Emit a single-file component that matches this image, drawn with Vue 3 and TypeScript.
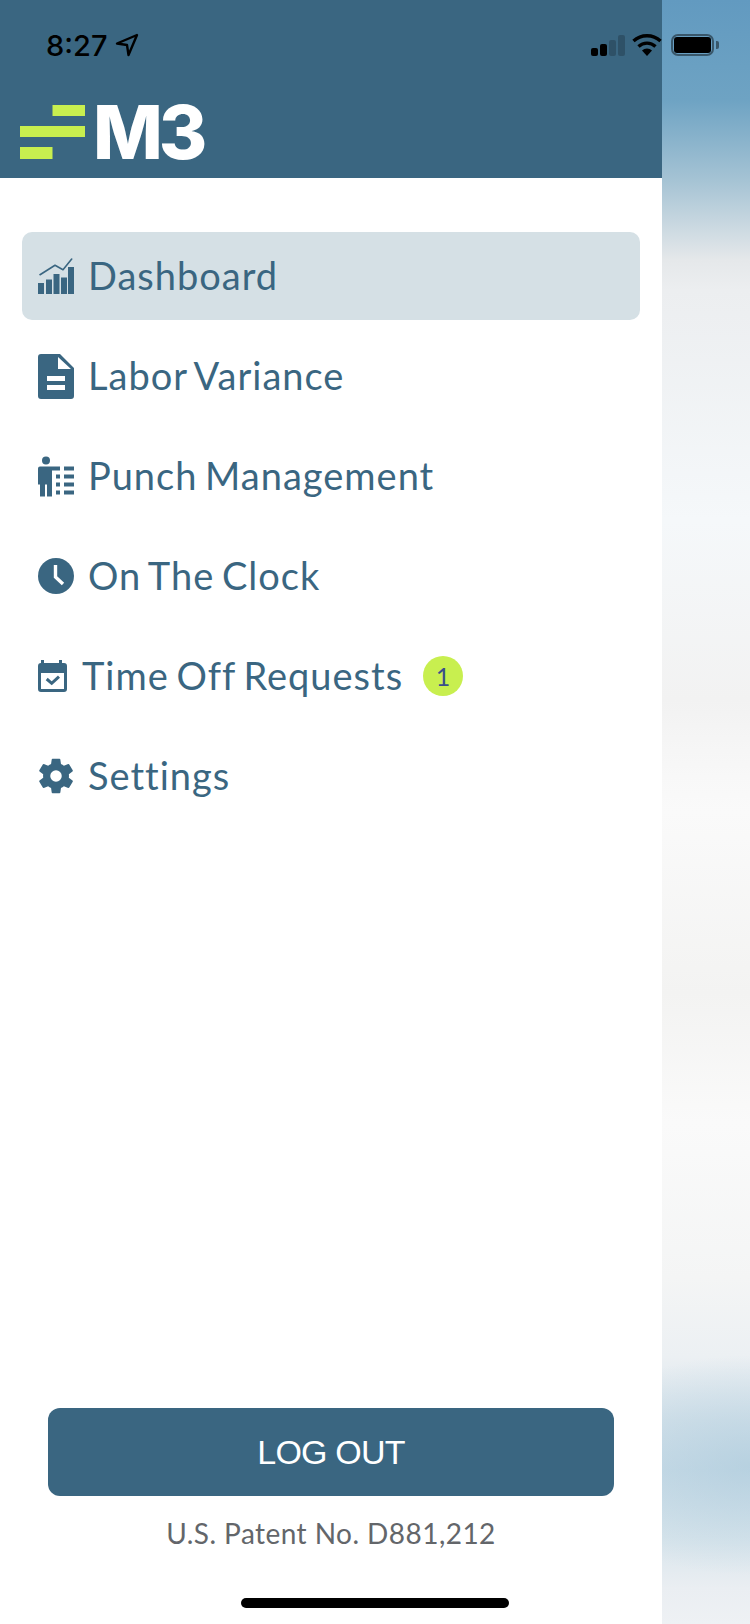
<template>
  <div class="screen">
    <aside class="drawer">
      <header class="brand">
        <svg class="logo-bars" viewBox="0 0 65 54" aria-hidden="true">
          <rect x="32.500" y="0" width="32.500" height="11" fill="#c8ef4f" />
          <rect x="0" y="21" width="65" height="11" fill="#c8ef4f" />
          <rect x="0" y="42" width="32.500" height="12" fill="#c8ef4f" />
        </svg>
        <span class="logo-text">M3</span>
      </header>

      <nav class="menu">
        <a
          v-for="item in items"
          :key="item.label"
          class="menu-item"
          :class="{ active: item.active }"
        >
          <svg v-if="item.icon === 'chart'" class="icon" viewBox="0 0 36 36">
            <path d="M0 25h6v11H0zM8 21.500h6V36H8zM15.500 16h6v20h-6zM23 19.500h6V36h-6zM30 9h6v27h-6z" fill="currentColor" />
            <path d="M2 16.700 17 7.300l8 4.400L33.700 1" fill="none" stroke="currentColor" stroke-width="1.600" stroke-linecap="round" stroke-linejoin="round" />
          </svg>
          <svg v-else-if="item.icon === 'file'" class="icon tall" viewBox="0 0 36 45">
            <path d="M3 0h19l14 14v28a3 3 0 0 1-3 3H3a3 3 0 0 1-3-3V3a3 3 0 0 1 3-3zM20 3v12h13zM9 22v5h18v-5zM9 31v5h18v-5z" fill="currentColor" fill-rule="evenodd" />
          </svg>
          <svg v-else-if="item.icon === 'person'" class="icon tall" viewBox="0 0 36 40">
            <circle cx="8" cy="4" r="4" fill="currentColor" />
            <path d="M2 10h20v4h-8v26H9V28H7v12H2V28H0V12a2 2 0 0 1 2-2z" fill="currentColor" />
            <path d="M26 10h10v4H26zM18 18h4v4h-4zM26 18h10v4H26zM18 26h4v4h-4zM26 26h10v4H26zM18 34h4v4h-4zM26 34h10v4H26z" fill="currentColor" />
          </svg>
          <svg v-else-if="item.icon === 'clock'" class="icon" viewBox="0 0 36 36">
            <circle cx="18" cy="18" r="18" fill="currentColor" />
            <path d="M17.500 7v12l7.500 7" fill="none" stroke="#fff" stroke-width="3.400" />
          </svg>
          <svg v-else-if="item.icon === 'calendar'" class="icon cal" viewBox="0 0 29 32">
            <path d="M3 0h3v3h15V0h3v3h2a3 3 0 0 1 3 3v23a3 3 0 0 1-3 3H3a3 3 0 0 1-3-3V6a3 3 0 0 1 3-3zM3 13v16h23V13z" fill="currentColor" fill-rule="evenodd" />
            <path d="M8.700 19l5 4.300 7.300-6.600" fill="none" stroke="currentColor" stroke-width="3" />
          </svg>
          <svg v-else class="icon" viewBox="0 0 24 24">
            <path d="M19.140 12.940a7.100 7.100 0 0 0 0-1.880l2.030-1.580a.5.500 0 0 0 .12-.61l-1.920-3.320a.5.500 0 0 0-.59-.22l-2.390.96a7 7 0 0 0-1.620-.94l-.36-2.540a.5.500 0 0 0-.48-.41h-3.840a.5.500 0 0 0-.47.410l-.36 2.540a7.300 7.300 0 0 0-1.620.94l-2.390-.96a.5.500 0 0 0-.59.220L2.740 8.870a.5.500 0 0 0 .12.610l2.030 1.580a7.400 7.400 0 0 0 0 1.880l-2.030 1.580a.5.500 0 0 0-.12.610l1.920 3.320a.5.500 0 0 0 .59.220l2.390-.96a7 7 0 0 0 1.620.94l.36 2.540a.5.500 0 0 0 .47.410h3.840a.5.500 0 0 0 .48-.41l.36-2.540a7 7 0 0 0 1.620-.94l2.390.96a.5.500 0 0 0 .59-.22l1.920-3.320a.5.500 0 0 0-.12-.61zM12 15.200a3.200 3.200 0 1 1 0-6.400 3.200 3.200 0 0 1 0 6.400z" fill="currentColor" transform="translate(-2.400 -2.400) scale(1.200)" />
          </svg>
          <span class="label">{{ item.label }}</span>
          <span v-if="item.badge" class="badge">{{ item.badge }}</span>
        </a>
      </nav>

      <footer class="foot">
        <button class="logout" type="button">LOG OUT</button>
        <p class="patent">U.S. Patent No. D881,212</p>
      </footer>
    </aside>
    <div class="backdrop"></div>

    <!-- status bar sits over both the drawer and the backdrop -->
    <div class="status">
      <span class="time">8:27</span>
      <svg class="loc" viewBox="0 0 24 24">
        <path d="M22 2 2 10.500l10 1.500 1.500 10z" fill="none" stroke="#000" stroke-width="2.400" stroke-linejoin="round" />
      </svg>
      <span class="status-gap"></span>
      <svg class="signal" viewBox="0 0 34 21">
        <rect x="0" y="13" width="7" height="8" rx="2" fill="#000" />
        <rect x="9" y="9" width="7" height="12" rx="2" fill="#000" />
        <rect x="18" y="5" width="7" height="16" rx="2" fill="#000" opacity=".2" />
        <rect x="27" y="0" width="7" height="21" rx="2" fill="#000" opacity=".2" />
      </svg>
      <svg class="wifi" viewBox="0 0 30 22">
        <path d="M15 22l-5-5.500a7.500 7.500 0 0 1 10 0z" fill="#000" />
        <path d="M6.500 12.500a12.500 12.500 0 0 1 17 0" fill="none" stroke="#000" stroke-width="3.400" />
        <path d="M1.500 7a20 20 0 0 1 27 0" fill="none" stroke="#000" stroke-width="3.400" />
      </svg>
      <span class="battery"><i></i></span>
      <span class="nub"></span>
    </div>
    <div class="home-bar"></div>
  </div>
</template>

<script setup lang="ts">
interface MenuItem {
  label: string
  icon: string
  active?: boolean
  badge?: number
}

const items: MenuItem[] = [
  { label: 'Dashboard', icon: 'chart', active: true },
  { label: 'Labor Variance', icon: 'file' },
  { label: 'Punch Management', icon: 'person' },
  { label: 'On The Clock', icon: 'clock' },
  { label: 'Time Off Requests', icon: 'calendar', badge: 1 },
  { label: 'Settings', icon: 'gear' }
]
</script>

<style>
html,
body {
  margin: 0;
  background: #fff;
}
</style>

<style scoped>
.screen {
  position: relative;
  display: flex;
  width: 750px;
  height: 1624px;
  overflow: hidden;
  font-family: Lato, 'Noto Sans', sans-serif;
}

.drawer {
  display: flex;
  flex-direction: column;
  width: 662px;
  background: #fff;
}

.brand {
  display: flex;
  align-items: flex-end;
  gap: 8px;
  box-sizing: border-box;
  height: 178px;
  padding: 0 0 19px 20px;
  background: #3a6681;
}

.logo-bars {
  width: 65px;
  height: 54px;
}

.logo-text {
  color: #fff;
  font-family: Inter, Lato, sans-serif;
  font-size: 74px;
  font-weight: 800;
  line-height: 54px;
  letter-spacing: -4px;
}

.menu {
  display: flex;
  flex-direction: column;
  gap: 12px;
  padding: 54px 22px 0;
}

.menu-item {
  display: flex;
  align-items: center;
  height: 88px;
  padding: 0 16px;
  border-radius: 10px;
  color: #3a6681;
}

.menu-item.active {
  background: #d5e0e5;
}

.icon {
  flex: none;
  width: 36px;
  height: 36px;
  margin-right: 14px;
}

.icon.tall {
  height: 45px;
}

.icon.cal {
  width: 29px;
  height: 32px;
  margin-right: 15px;
}

.label {
  padding-bottom: 2px;
  font-size: 38px;
  line-height: 44px;
  letter-spacing: 1px;
  word-spacing: -3px;
}

.badge {
  display: flex;
  align-items: center;
  justify-content: center;
  width: 40px;
  height: 40px;
  margin-left: 20px;
  border-radius: 50%;
  background: #c8ef4f;
  color: #3a4f8a;
  font-size: 25px;
}

.foot {
  display: flex;
  flex-direction: column;
  align-items: center;
  margin-top: auto;
  padding-bottom: 74px;
}

.logout {
  width: 566px;
  height: 88px;
  border: 0;
  border-radius: 12px;
  background: #3a6681;
  color: #fff;
  font-family: 'Liberation Sans', Arial, sans-serif;
  font-size: 34px;
  letter-spacing: -0.8px;
}

.patent {
  margin: 20px 0 0;
  color: #63666a;
  font-size: 28px;
  line-height: 34px;
  letter-spacing: 0.45px;
}

.backdrop {
  flex: 1;
  background:
    radial-gradient(ellipse 190px 110px at 100% 1465px, rgba(170, 201, 219, 0.6), rgba(170, 201, 219, 0)),
    linear-gradient(180deg, #629ac0 0, #6ea3c3 100px, #a5c3d4 180px, #e5e8ea 260px, #eceef0 290px, #f5f8fa 520px, #f2f2f2 700px, #f8f8f8 777px, #fafafa 812px, #f3f3f2 993px, #fafafa 1123px, #f4f5f5 1278px, #ecf0f3 1356px, #d6e3eb 1420px, #cbdde8 1470px, #d8e5ec 1537px, #eaeef2 1588px, #eef1f4 1624px);
}

.status {
  position: absolute;
  top: 0;
  left: 0;
  right: 0;
  display: flex;
  align-items: center;
  height: 90px;
  padding: 0 31px 0 46px;
  box-sizing: border-box;
}

.time {
  font-family: Inter, 'Liberation Sans', sans-serif;
  font-size: 29px;
  font-weight: 500;
  color: #000;
}

.loc {
  width: 24px;
  height: 24px;
  margin-left: 8px;
}

.status-gap {
  flex: 1;
}

.signal {
  width: 34px;
  height: 21px;
}

.wifi {
  width: 30px;
  height: 22px;
  margin-left: 7px;
}

.battery {
  box-sizing: border-box;
  width: 43px;
  height: 22px;
  margin-left: 9px;
  padding: 1px;
  border: 2px solid rgba(0, 0, 0, 0.45);
  border-radius: 7px;
}

.battery i {
  display: block;
  height: 100%;
  border-radius: 3px;
  background: #000;
}

.nub {
  width: 3px;
  height: 8px;
  margin-left: 2px;
  border-radius: 0 2px 2px 0;
  background: rgba(0, 0, 0, 0.45);
}

.home-bar {
  position: absolute;
  left: 241px;
  bottom: 16px;
  width: 268px;
  height: 10px;
  border-radius: 5px;
  background: #000;
}
</style>
